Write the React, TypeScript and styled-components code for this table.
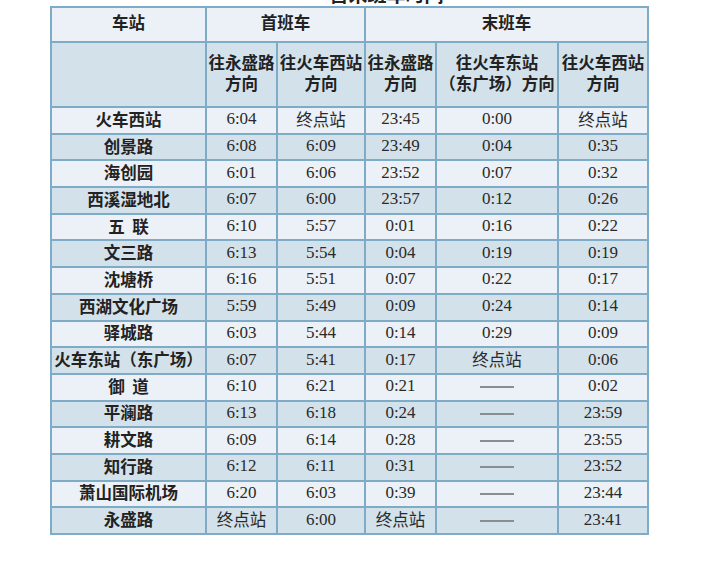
import React from 'react';
import styled, { createGlobalStyle } from 'styled-components';

const GlobalStyle = createGlobalStyle`
  html, body {
    margin: 0;
    padding: 0;
    background: #fff;
    overflow: hidden;
  }
`;

const Page = styled.div`
  width: 720px;
  height: 571px;
  display: flex;
  flex-direction: column;
  padding-left: 51px;
  box-sizing: border-box;
`;

const TitleStrip = styled.div`
  height: 6px;
  width: 595px;
  overflow: hidden;
  display: flex;
  justify-content: center;
  align-items: flex-end;
  padding-left: 76px;
  box-sizing: border-box;
`;

const Title = styled.div`
  font-family: "Noto Sans CJK SC", sans-serif;
  font-weight: 700;
  font-size: 19px;
  line-height: 19px;
  color: #222;
  margin-bottom: 3px;
  flex-shrink: 0;
`;

const Table = styled.table`
  border-collapse: collapse;
  table-layout: fixed;
  width: 597px;
  margin-left: -1px;
`;

const HeadCell = styled.th<{ $dark?: boolean }>`
  border: 2px solid #7eabc6;
  background: ${(p) => (p.$dark ? '#d3e1ea' : '#ebf1f6')};
  font-family: "Noto Sans CJK SC", sans-serif;
  font-weight: 700;
  font-size: 16.5px;
  line-height: 21px;
  color: #222;
  padding: 0 0 4px;
  text-align: center;
  vertical-align: middle;
`;

const Row = styled.tr<{ $dark: boolean }>`
  height: 26.69px;
  background: ${(p) => (p.$dark ? '#d3e1ea' : '#ebf1f6')};
`;

const StationCell = styled.td`
  border: 2px solid #7eabc6;
  font-family: "Noto Sans CJK SC", sans-serif;
  font-weight: 700;
  font-size: 16.5px;
  line-height: 20px;
  color: #222;
  padding: 0 0 3px;
  text-align: center;
  white-space: pre;
`;

const TimeCell = styled.td<{ $word?: boolean }>`
  border: 2px solid #7eabc6;
  font-family: ${(p) =>
    p.$word ? '"Noto Sans CJK SC", sans-serif' : '"Liberation Serif", serif'};
  font-size: ${(p) => (p.$word ? '16.5px' : '17px')};
  font-weight: 400;
  line-height: 20px;
  color: #2a2a2a;
  padding: ${(p) => (p.$word ? '0 0 3px' : '0 0 2px')};
  text-align: center;
`;

const Dash = styled.span`
  display: inline-block;
  width: 34px;
  height: 2px;
  background: #8a8e92;
  vertical-align: middle;
`;

type Stop = [string, string, string, string, string, string];

const stops: Stop[] = [
  ['火车西站', '6:04', '终点站', '23:45', '0:00', '终点站'],
  ['创景路', '6:08', '6:09', '23:49', '0:04', '0:35'],
  ['海创园', '6:01', '6:06', '23:52', '0:07', '0:32'],
  ['西溪湿地北', '6:07', '6:00', '23:57', '0:12', '0:26'],
  ['五  联', '6:10', '5:57', '0:01', '0:16', '0:22'],
  ['文三路', '6:13', '5:54', '0:04', '0:19', '0:19'],
  ['沈塘桥', '6:16', '5:51', '0:07', '0:22', '0:17'],
  ['西湖文化广场', '5:59', '5:49', '0:09', '0:24', '0:14'],
  ['驿城路', '6:03', '5:44', '0:14', '0:29', '0:09'],
  ['火车东站（东广场）', '6:07', '5:41', '0:17', '终点站', '0:06'],
  ['御  道', '6:10', '6:21', '0:21', '-', '0:02'],
  ['平澜路', '6:13', '6:18', '0:24', '-', '23:59'],
  ['耕文路', '6:09', '6:14', '0:28', '-', '23:55'],
  ['知行路', '6:12', '6:11', '0:31', '-', '23:52'],
  ['萧山国际机场', '6:20', '6:03', '0:39', '-', '23:44'],
  ['永盛路', '终点站', '6:00', '终点站', '-', '23:41'],
];

const renderTime = (value: string, key: number) => {
  if (value === '-') {
    return (
      <TimeCell key={key}>
        <Dash />
      </TimeCell>
    );
  }
  const isWord = /[^\d:]/.test(value);
  return (
    <TimeCell key={key} $word={isWord}>
      {value}
    </TimeCell>
  );
};

const App: React.FC = () => {
  return (
    <Page>
      <GlobalStyle />
      <TitleStrip>
        <Title>首末班车时间</Title>
      </TitleStrip>
      <Table>
        <colgroup>
          <col style={{ width: 155 }} />
          <col style={{ width: 71 }} />
          <col style={{ width: 88 }} />
          <col style={{ width: 71 }} />
          <col style={{ width: 122 }} />
          <col style={{ width: 90 }} />
        </colgroup>
        <thead>
          <tr style={{ height: 35 }}>
            <HeadCell>车站</HeadCell>
            <HeadCell colSpan={2}>首班车</HeadCell>
            <HeadCell colSpan={3}>末班车</HeadCell>
          </tr>
          <tr style={{ height: 65 }}>
            <HeadCell $dark />
            <HeadCell $dark>往永盛路<br />方向</HeadCell>
            <HeadCell $dark>往火车西站<br />方向</HeadCell>
            <HeadCell $dark>往永盛路<br />方向</HeadCell>
            <HeadCell $dark>往火车东站<br />（东广场）方向</HeadCell>
            <HeadCell $dark>往火车西站<br />方向</HeadCell>
          </tr>
        </thead>
        <tbody>
          {stops.map((s, i) => (
            <Row key={s[0]} $dark={i % 2 === 1}>
              <StationCell>{s[0]}</StationCell>
              {s.slice(1).map((v, j) => renderTime(v, j))}
            </Row>
          ))}
        </tbody>
      </Table>
    </Page>
  );
};

export default App;
